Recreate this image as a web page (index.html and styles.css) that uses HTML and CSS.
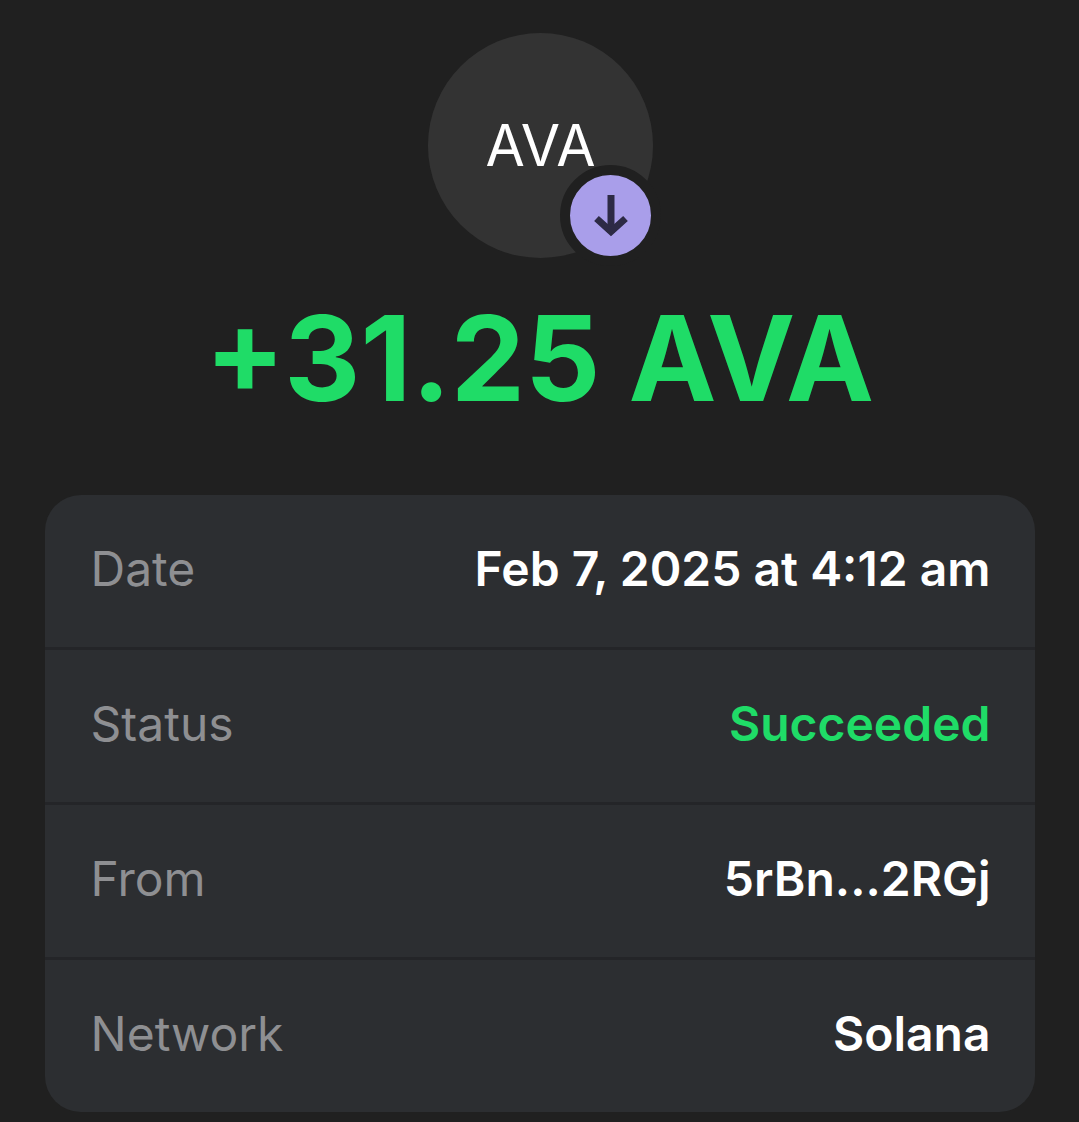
FILE: index.html
```html
<!DOCTYPE html>
<html>
<head>
    <title>Transaction</title>
    <link rel="stylesheet" href="styles.css">
</head>

<body>
    <div class="token">
        <div class="token-circle">AVA</div>
        <div class="token-badge">
            <svg width="81" height="81" viewBox="0 0 81 81" fill="none" stroke="#2d2a45" stroke-width="7" stroke-linejoin="miter">
                <path d="M41 20V58"/>
                <path d="M26.5 43.5L41 56.5L55.5 43.5"/>
            </svg>
        </div>
    </div>

    <h1 class="amount">+31.25 AVA</h1>

    <div class="details">
        <div class="row">
            <span class="row-label">Date</span>
            <span class="row-value">Feb 7, 2025 at 4:12 am</span>
        </div>
        <div class="row">
            <span class="row-label">Status</span>
            <span class="row-value success">Succeeded</span>
        </div>
        <div class="row">
            <span class="row-label">From</span>
            <span class="row-value">5rBn...2RGj</span>
        </div>
        <div class="row">
            <span class="row-label">Network</span>
            <span class="row-value">Solana</span>
        </div>
    </div>
</body>
</html>
```
FILE: styles.css
```css
html, body {
    margin: 0;
    height: 1122px;
    overflow: hidden;
}

body {
    font-family: Inter, "Liberation Sans", sans-serif;
    background-color: #202020;
    color: #fff;
    display: flex;
    flex-direction: column;
    align-items: center;
    padding-top: 33px;
    box-sizing: border-box;
}

.token {
    position: relative;
    width: 225px;
    height: 225px;
    margin-left: 2px;
}

.token-circle {
    width: 225px;
    height: 225px;
    border-radius: 50%;
    background-color: #333333;
    display: flex;
    align-items: center;
    justify-content: center;
    font-size: 57px;
    font-weight: 400;
}

.token-badge {
    position: absolute;
    right: -8px;
    bottom: -8px;
    width: 81px;
    height: 81px;
    border: 10px solid #202020;
    border-radius: 50%;
    background-color: #a99eea;
    display: flex;
    align-items: center;
    justify-content: center;
}

.amount {
    margin: 32px 0 0;
    font-size: 118px;
    line-height: 136px;
    font-weight: 700;
    color: #1fdc67;
}

.details {
    width: 990px;
    margin-top: 69px;
    background-color: #2c2e31;
    border-radius: 36px;
    overflow: hidden;
}

.row {
    height: 146px;
    padding: 0 44px 6px 46px;
    display: flex;
    justify-content: space-between;
    align-items: center;
    border-bottom: 3px solid #242528;
    font-size: 48px;
}

.row:last-child {
    border-bottom: none;
}

.row-label {
    color: #8e8f92;
}

.row-value {
    font-weight: 600;
}

.success {
    color: #1fdc67;
}
```
